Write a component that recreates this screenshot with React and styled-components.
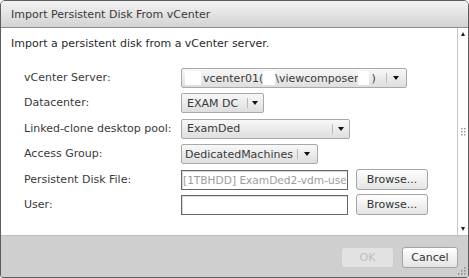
import React from "react";
import styled, { createGlobalStyle } from "styled-components";

const Global = createGlobalStyle`
  html, body { margin: 0; padding: 0; background: #ffffff; }
  * { box-sizing: border-box; }
`;

const Window = styled.div`
  position: relative;
  width: 469px;
  height: 278px;
  border: 1px solid #5c5c5c;
  border-radius: 5px 5px 3px 3px;
  display: flex;
  flex-direction: column;
  overflow: hidden;
  font-family: "DejaVu Sans", Verdana, sans-serif;
  font-size: 11px;
  color: #333;
  background: #fff;
`;

const TitleBar = styled.div`
  flex: none;
  height: 27px;
  display: flex;
  align-items: center;
  padding-left: 10px;
  background: linear-gradient(#f3f3f3, #d3d3d3);
  border-bottom: 1px solid #8c8c8c;
  color: #3a3a3a;
`;

const Body = styled.div`
  flex: 1;
  display: flex;
  min-height: 0;
`;

const Content = styled.div`
  flex: 1;
  padding: 9px 0 0 10px;
`;

const Description = styled.div`
  line-height: 14px;
  color: #2a2a2a;
`;

const Form = styled.div`
  margin: 17px 0 0 13px;
  display: grid;
  grid-template-columns: 157px auto;
  grid-auto-rows: 20px;
  row-gap: 5.4px;
  align-items: center;
`;

const Label = styled.div`
  color: #3a3a3a;
  line-height: 14px;
`;

const Field = styled.div`
  display: flex;
  align-items: center;
  height: 20px;
`;

const Select = styled.div`
  width: ${(p) => p.$w}px;
  height: 20px;
  display: flex;
  align-items: center;
  border: 1px solid #a9a9a9;
  border-radius: 2px;
  background: linear-gradient(#f8f8f8, #dedede);
  color: #3a3a3a;
  white-space: nowrap;
`;

const SelectValue = styled.div`
  flex: 1;
  display: flex;
  align-items: center;
  padding-left: ${(p) => p.$pad ?? 5}px;
  overflow: hidden;
`;

const Redact = styled.span`
  display: inline-block;
  width: ${(p) => p.$w}px;
  height: 14px;
  margin-right: ${(p) => p.$mr ?? 0}px;
  background: #fff;
`;

const ArrowPart = styled.div`
  position: relative;
  flex: none;
  width: ${(p) => p.$w}px;
  height: 100%;
  display: flex;
  align-items: center;
  justify-content: center;
  &::before {
    content: "";
    position: absolute;
    left: 0;
    top: 4px;
    bottom: 4px;
    width: 1px;
    background: #b9b9b9;
  }
`;

const Caret = styled.span`
  width: 0;
  height: 0;
  border-left: 3px solid transparent;
  border-right: 3px solid transparent;
  border-top: 4px solid #111;
`;

const TextInput = styled.input`
  width: 167px;
  height: 20px;
  margin: 0;
  padding: 0 1px;
  border: 1px solid #666;
  box-shadow: inset 1px 1px 0 #d8d8d8;
  background: #fff;
  font-family: inherit;
  font-size: 10.6px;
  color: #9b9b9b;
  outline: none;
`;

const Button = styled.button`
  width: ${(p) => p.$w}px;
  height: 21px;
  margin: 0 0 0 ${(p) => p.$ml ?? 0}px;
  padding: 0;
  border: 1px solid ${(p) => (p.disabled ? "#cdcdcd" : "#a4a4a4")};
  border-radius: 3px;
  background: ${(p) =>
    p.disabled ? "#e2e2e2" : "linear-gradient(#ffffff, #e4e4e4)"};
  font-family: inherit;
  font-size: 11px;
  color: ${(p) => (p.disabled ? "#bdbdbd" : "#333")};
`;

const ScrollBar = styled.div`
  flex: none;
  width: 11px;
  border-left: 1px solid #c4c4c4;
  display: flex;
  flex-direction: column;
  justify-content: space-between;
  align-items: center;
  padding: 4px 0 4px;
  background: #fff;
`;

const ScrollArrow = styled.span`
  width: 0;
  height: 0;
  border-left: 2.5px solid transparent;
  border-right: 2.5px solid transparent;
  ${(p) =>
    p.$up ? "border-bottom: 4px solid #222;" : "border-top: 4px solid #222;"}
`;

const Footer = styled.div`
  flex: none;
  height: 42px;
  border-top: 1px solid #bdbdbd;
  background: #cfcfcf;
  display: flex;
  justify-content: flex-end;
  align-items: flex-start;
  padding: 11px 10px 0 0;
  gap: 8px;
`;

const ResizeGrip = styled.svg`
  position: absolute;
  right: 1px;
  bottom: 1px;
`;

const Dots = ({ w = 5, h = 8 }) => (
  <svg width={w} height={h} viewBox={`0 0 ${w} ${h}`}>
    {[0, 3, 6].map((y) =>
      [0, 3].map((x) => (
        <rect key={`${x}-${y}`} x={x} y={y} width="1.5" height="1.5" fill="#9a9a9a" />
      ))
    )}
  </svg>
);

export default function App() {
  return (
    <>
      <Global />
      <Window>
        <TitleBar>Import Persistent Disk From vCenter</TitleBar>
        <Body>
          <Content>
            <Description>Import a persistent disk from a vCenter server.</Description>
            <Form>
              <Label>vCenter Server:</Label>
              <Field>
                <Select $w={226}>
                  <SelectValue $pad={3}>
                    <Redact $w={16} $mr={2} />
                    vcenter01(
                    <Redact $w={12} />
                    \viewcomposer
                    <Redact $w={11} $mr={2} />)
                  </SelectValue>
                  <ArrowPart $w={20}>
                    <Caret />
                  </ArrowPart>
                </Select>
              </Field>

              <Label>Datacenter:</Label>
              <Field>
                <Select $w={83}>
                  <SelectValue>EXAM DC</SelectValue>
                  <ArrowPart $w={16}>
                    <Caret />
                  </ArrowPart>
                </Select>
              </Field>

              <Label>Linked-clone desktop pool:</Label>
              <Field>
                <Select $w={169}>
                  <SelectValue>ExamDed</SelectValue>
                  <ArrowPart $w={17}>
                    <Caret />
                  </ArrowPart>
                </Select>
              </Field>

              <Label>Access Group:</Label>
              <Field>
                <Select $w={137}>
                  <SelectValue $pad={3}>DedicatedMachines</SelectValue>
                  <ArrowPart $w={20}>
                    <Caret />
                  </ArrowPart>
                </Select>
              </Field>

              <Label>Persistent Disk File:</Label>
              <Field>
                <TextInput readOnly value="[1TBHDD] ExamDed2-vdm-user" />
                <Button $w={72} $ml={8}>Browse...</Button>
              </Field>

              <Label>User:</Label>
              <Field>
                <TextInput readOnly value="" />
                <Button $w={72} $ml={8}>Browse...</Button>
              </Field>
            </Form>
          </Content>
          <ScrollBar>
            <ScrollArrow $up />
            <Dots />
            <ScrollArrow />
          </ScrollBar>
        </Body>
        <Footer>
          <Button $w={53} disabled>OK</Button>
          <Button $w={56}>Cancel</Button>
        </Footer>
        <ResizeGrip width="9" height="9" viewBox="0 0 9 9">
          {[
            [6, 0],
            [3, 3],
            [6, 3],
            [0, 6],
            [3, 6],
            [6, 6],
          ].map(([x, y]) => (
            <rect key={`${x}-${y}`} x={x} y={y} width="1.5" height="1.5" fill="#8a8a8a" />
          ))}
        </ResizeGrip>
      </Window>
    </>
  );
}
